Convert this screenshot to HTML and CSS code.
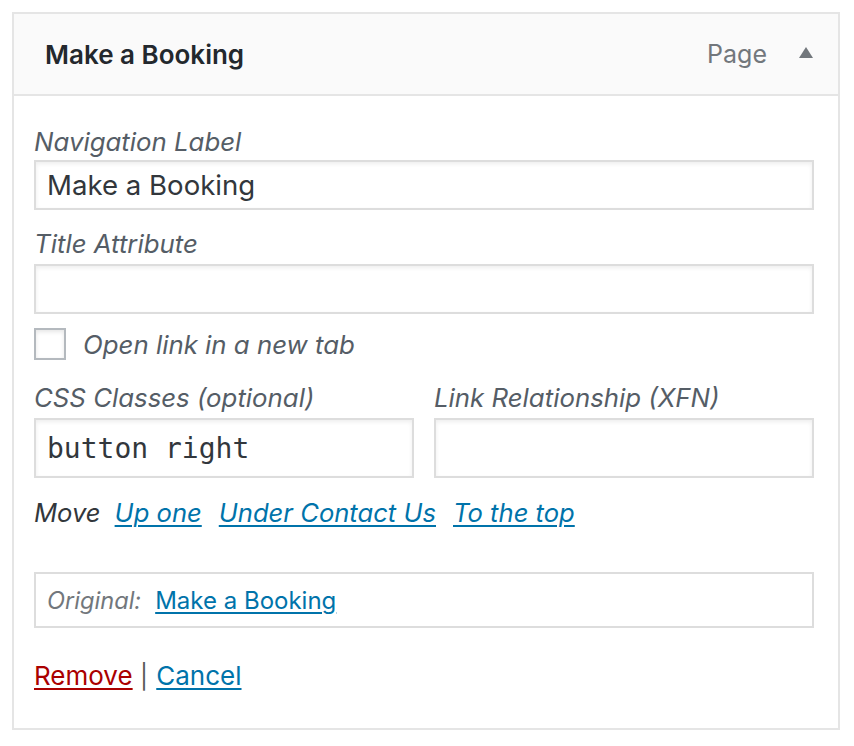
FILE: index.html
```html
<!DOCTYPE html>
<html>
<head>
<meta charset="utf-8">
<link rel="stylesheet" href="styles.css">
</head>
<body>
<div class="menu-item">
  <div class="handle">
    <span class="item-title">Make a Booking</span>
    <span class="controls">
      <span class="item-type">Page</span>
      <span class="arrow"></span>
    </span>
  </div>
  <div class="settings">
    <label class="field-label">Navigation Label</label>
    <div class="text-input nav-input"><span class="value">Make a Booking</span></div>

    <label class="field-label second">Title Attribute</label>
    <div class="text-input nav-input"></div>

    <div class="check-row">
      <span class="checkbox"></span>
      <span class="check-label">Open link in a new tab</span>
    </div>

    <div class="two-col">
      <div class="col">
        <label class="field-label">CSS Classes (optional)</label>
        <div class="text-input tall-input"><span class="value mono">button right</span></div>
      </div>
      <div class="col">
        <label class="field-label">Link Relationship (XFN)</label>
        <div class="text-input tall-input"></div>
      </div>
    </div>

    <div class="move-row">
      <span class="move-label">Move</span>
      <a class="move-link" href="#">Up one</a>
      <a class="move-link" href="#">Under Contact Us</a>
      <a class="move-link" href="#">To the top</a>
    </div>

    <div class="original">
      <span class="original-label">Original:</span>
      <a class="original-link" href="#">Make a Booking</a>
    </div>

    <div class="actions">
      <a class="remove" href="#">Remove</a>
      <span class="sep">|</span>
      <a class="cancel" href="#">Cancel</a>
    </div>
  </div>
</div>
</body>
</html>
```

FILE: styles.css
```css
* { box-sizing: border-box; }

html, body {
  margin: 0;
  padding: 0;
  background: #ffffff;
}

body {
  font-family: Inter, "Liberation Sans", Arial, sans-serif;
  color: #555d66;
}

.menu-item {
  margin: 12px 0 0 12px;
  width: 828px;
  height: 718px;
  border: 2px solid #e5e5e5;
  background: #ffffff;
}

.handle {
  display: flex;
  align-items: center;
  justify-content: space-between;
  height: 82px;
  padding: 0 25px 0 31px;
  background: #fafafa;
  border-bottom: 2px solid #e5e5e5;
}

.item-title {
  font-size: 26px;
  font-weight: 600;
  color: #23282d;
}

.controls {
  display: flex;
  align-items: center;
}

.item-type {
  font-size: 25px;
  color: #72777c;
  margin-right: 32px;
}

.arrow {
  width: 0;
  height: 0;
  border-left: 7.5px solid transparent;
  border-right: 7.5px solid transparent;
  border-bottom: 11px solid #72777c;
  margin-top: -4px;
}

.settings {
  padding: 28px 24px 0 20px;
}

.field-label {
  display: block;
  font-size: 25.8px;
  font-style: italic;
  line-height: 36px;
  color: #555d66;
  white-space: nowrap;
}

.field-label.second {
  margin-top: 16px;
  margin-bottom: 2px;
}

.text-input {
  display: flex;
  align-items: center;
  width: 100%;
  border: 2px solid #dddddd;
  background: #ffffff;
  box-shadow: inset 0 2px 4px rgba(0, 0, 0, 0.07);
  padding: 0 11px;
}

.nav-input { height: 50px; }
.tall-input { height: 60px; }

.value {
  font-size: 27.6px;
  color: #32373c;
}

.value.mono {
  font-family: "DejaVu Sans Mono", "Liberation Mono", monospace;
  font-size: 28px;
  color: #32373c;
}

.check-row {
  display: flex;
  align-items: center;
  margin-top: 14px;
  height: 32px;
}

.checkbox {
  width: 32px;
  height: 32px;
  border: 2px solid #b4b9be;
  background: #ffffff;
  box-shadow: inset 0 2px 4px rgba(0, 0, 0, 0.1);
  margin-right: 17px;
}

.check-label {
  font-size: 25.8px;
  font-style: italic;
  color: #555d66;
}

.two-col {
  display: grid;
  grid-template-columns: 1fr 1fr;
  column-gap: 20px;
  margin-top: 20px;
}

.two-col .field-label {
  margin-bottom: 2px;
}

.move-row {
  display: flex;
  align-items: baseline;
  margin-top: 17px;
  line-height: 36px;
  font-size: 25.6px;
  font-style: italic;
}

.move-label {
  color: #32373c;
  margin-right: 14px;
}

.move-link {
  color: #0073aa;
  text-decoration: underline;
  text-decoration-thickness: 2px;
  text-underline-offset: 3px;
  margin-right: 17px;
}

.original {
  display: flex;
  align-items: center;
  margin-top: 41px;
  height: 56px;
  border: 2px solid #dddddd;
  padding: 0 11px;
}

.original-label {
  font-size: 23.6px;
  font-style: italic;
  color: #72777c;
  margin-right: 14px;
}

.original-link {
  font-size: 24px;
  color: #0073aa;
  text-decoration: underline;
  text-decoration-thickness: 2px;
  text-underline-offset: 3px;
}

.actions {
  margin-top: 30px;
  line-height: 36px;
  font-size: 26px;
}

.remove {
  color: #aa0000;
  text-decoration: underline;
  text-decoration-thickness: 2px;
  text-underline-offset: 3px;
}

.sep {
  color: #555555;
  margin: 0 1px 0 0;
  font-size: 24px;
}

.cancel {
  color: #0073aa;
  text-decoration: underline;
  text-decoration-thickness: 2px;
  text-underline-offset: 3px;
}
```
